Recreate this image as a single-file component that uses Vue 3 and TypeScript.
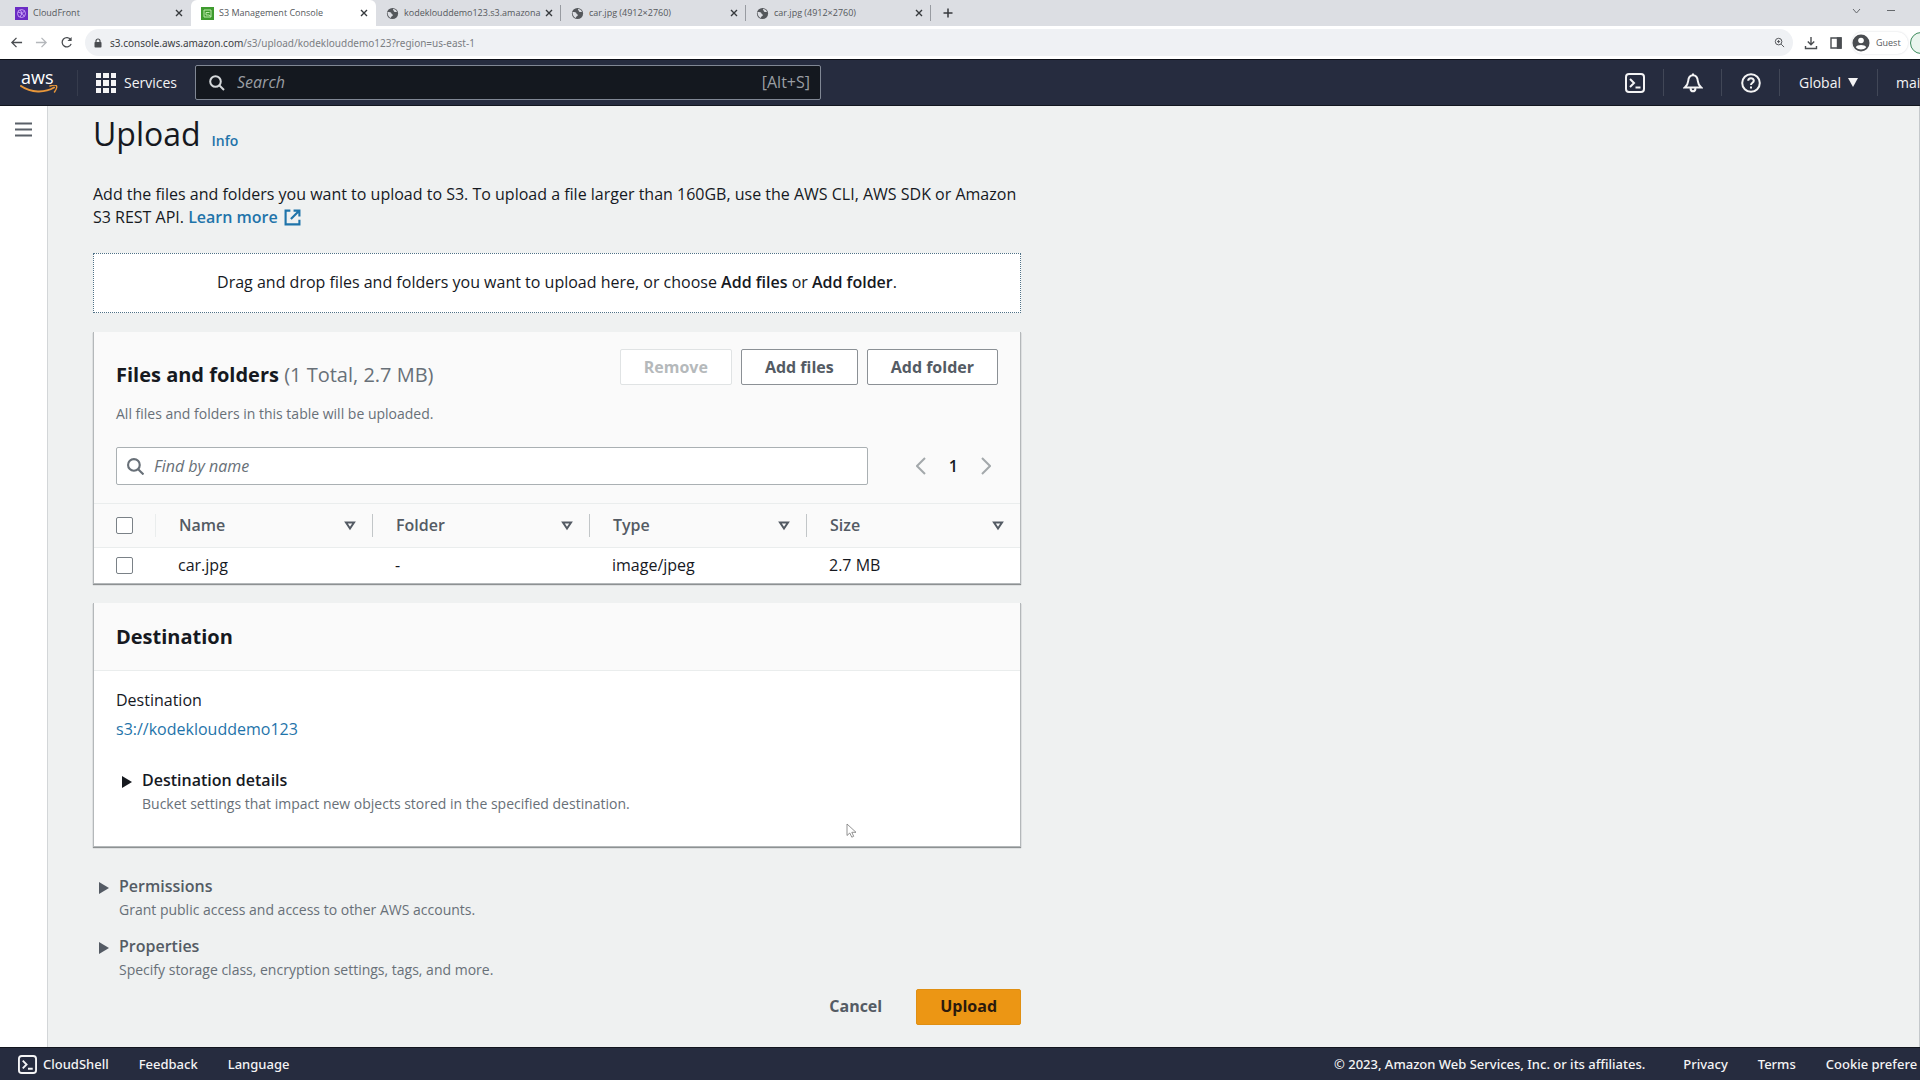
<script setup lang="ts">
interface Tab {
  title: string
  icon: 'cloudfront' | 's3' | 'globe'
  active?: boolean
}

interface UploadFile {
  name: string
  folder: string
  type: string
  size: string
}

const tabs: Tab[] = [
  { title: 'CloudFront', icon: 'cloudfront' },
  { title: 'S3 Management Console', icon: 's3', active: true },
  { title: 'kodeklouddemo123.s3.amazona', icon: 'globe' },
  { title: 'car.jpg (4912×2760)', icon: 'globe' },
  { title: 'car.jpg (4912×2760)', icon: 'globe' },
]

const columns: string[] = ['Name', 'Folder', 'Type', 'Size']

const files: UploadFile[] = [
  { name: 'car.jpg', folder: '-', type: 'image/jpeg', size: '2.7 MB' },
]
</script>

<template>
  <div class="window">
    <div class="tabs">
      <div v-for="(tab, i) in tabs" :key="i" class="tab" :class="{ active: tab.active }">
        <svg v-if="tab.icon === 'cloudfront'" class="favicon" viewBox="0 0 13 13">
          <rect width="13" height="13" fill="#6b2bc4" />
          <g fill="none" stroke="#d9b8ff" stroke-width="0.8">
            <circle cx="6.5" cy="6.5" r="4" />
            <path d="M3 5l4 1.5L9.5 4M5 10l2-3.500L9 9M5.500 3L7 6.500" />
          </g>
        </svg>
        <svg v-else-if="tab.icon === 's3'" class="favicon" viewBox="0 0 13 13">
          <rect width="13" height="13" fill="#3f9b2f" />
          <path d="M3 3h7v7H3zM5 5.500h3.500M5 5.500v2.500h3l2 1.500" fill="none" stroke="#c9f2b8" stroke-width="0.9" />
        </svg>
        <svg v-else class="favicon" viewBox="0 0 13 13">
          <circle cx="6.5" cy="6.5" r="5.600" fill="#54575b" />
          <path d="M1.500 5c2 0 4 .3 4 1.500S7 7 6.800 8.200 5 9 4.800 11C3 10.300 1.500 8.500 1.500 5z" fill="#dcdee3" />
          <path d="M7 2c-.5 1.500 1 1.300 1 2.500 1 .8 2 .3 3 .5C10.500 3.300 9 2 7 2z" fill="#dcdee3" />
        </svg>
        <span class="tab-title">{{ tab.title }}</span>
        <button class="tab-close" type="button" aria-label="Close tab">
          <svg viewBox="0 0 8 8"><path d="M1 1l6 6M7 1L1 7" /></svg>
        </button>
      </div>
      <button class="tab-new" type="button" aria-label="New tab">
        <svg viewBox="0 0 10 10"><path d="M5 0.500v9M0.500 5h9" /></svg>
      </button>
      <div class="window-controls">
        <svg width="9" height="6" viewBox="0 0 9 6"><path d="M1 1l3.500 4L8 1" /></svg>
        <svg width="8" height="6" viewBox="0 0 8 6"><path d="M0 2.500h8" /></svg>
      </div>
    </div>

    <div class="toolbar">
      <button type="button" aria-label="Back">
        <svg viewBox="0 0 14 14"><path d="M13 7H2M7 2L2 7l5 5" /></svg>
      </button>
      <button type="button" aria-label="Forward" class="dim">
        <svg viewBox="0 0 14 14"><path d="M1 7h11M7 2l5 5-5 5" /></svg>
      </button>
      <button type="button" aria-label="Reload">
        <svg viewBox="0 0 14 14"><path d="M11.500 4A5 5 0 1 0 12 8.500" /><path d="M12.500 1v4.500H8z" fill="#4a4d51" stroke="none" /></svg>
      </button>
      <div class="address">
        <svg class="lock" viewBox="0 0 8 10"><rect x="0.500" y="4" width="7" height="5.500" rx="0.800" /><path d="M2 4.500V3a2 2 0 0 1 4 0v1.500" fill="none" stroke="#4a4d51" stroke-width="1.200" /></svg>
        <span class="url"><span class="host">s3.console.aws.amazon.com</span>/s3/upload/kodeklouddemo123?region=us-east-1</span>
        <svg class="zoom" viewBox="0 0 12 12"><circle cx="5" cy="5" r="3.600" /><path d="M7.800 7.800L11 11M5 3.300v3.400M3.300 5h3.400" /></svg>
      </div>
      <div class="tools">
        <svg width="14" height="14" viewBox="0 0 14 14"><path d="M7 1v7.500M3.800 5.500L7 8.700l3.200-3.200M1.500 10v2.500h11V10" /></svg>
        <svg width="12" height="12" viewBox="0 0 12 12"><path d="M1 1h10v10H1z" /><path d="M7.500 1H11v10H7.500z" fill="#4a4d51" /></svg>
        <button class="profile" type="button">
          <svg width="18" height="18" viewBox="0 0 18 18"><circle cx="9" cy="9" r="8.500" fill="#4a4d51" stroke="none" /><circle cx="9" cy="6.500" r="2.800" fill="#fff" stroke="none" /><path d="M3.800 13.200c1-3 9.400-3 10.400 0-2.500 3-7.900 3-10.400 0z" fill="#fff" stroke="none" /></svg>
          <span>Guest</span>
        </button>
        <span class="update"></span>
      </div>
    </div>

    <header class="nav">
      <a class="logo" href="#" aria-label="AWS home">
        <span>aws</span>
        <svg viewBox="0 0 38 9"><path d="M1 1c10 7 24 7 33 1.500" fill="none" stroke="#e8973a" stroke-width="2" stroke-linecap="round" /><path d="M30 1c3-1 6-1 6.500 0s-.5 4-2 6" fill="none" stroke="#e8973a" stroke-width="1.500" stroke-linecap="round" /></svg>
      </a>
      <button class="services" type="button">
        <svg viewBox="0 0 20 20">
          <path d="M0 0h5v5H0zM7 0h6v5H7zM15 0h5v5h-5zM0 7h5v6H0zM7 7h6v6H7zM15 7h5v6h-5zM0 15h5v5H0zM7 15h6v5H7zM15 15h5v5h-5z" />
        </svg>
        <span>Services</span>
      </button>
      <label class="nav-search">
        <svg viewBox="0 0 16 16"><circle cx="6.500" cy="6.500" r="5.300" /><path d="M10.500 10.500L15 15" /></svg>
        <input type="search" placeholder="Search" aria-label="Search" />
        <span>[Alt+S]</span>
      </label>
      <div class="nav-right">
        <button class="cell shell" type="button" aria-label="CloudShell">
          <svg viewBox="0 0 20 20"><rect x="1" y="1" width="18" height="18" rx="3" /><path d="M5 6l4 4-4 4M10.500 14.500h5" /></svg>
        </button>
        <button class="cell bell" type="button" aria-label="Notifications">
          <svg viewBox="0 0 20 20"><path d="M1.800 14.500C4 12.500 5 10.500 5.200 8 5.500 4 7.500 2.200 10 2.200S14.500 4 14.800 8c.2 2.500 1.200 4.500 3.400 6.500zM7.500 15.500c.5 3.800 4.500 3.800 5 0M10 0.500v1.500" /></svg>
        </button>
        <button class="cell help" type="button" aria-label="Help">
          <svg viewBox="0 0 20 20"><circle cx="10" cy="10" r="8.800" /><path d="M7.200 7.800c0-3.500 5.600-3.500 5.600 0 0 2-2.800 2-2.800 4.200M10 13.500v2" /></svg>
        </button>
        <button class="cell region" type="button">
          <span>Global</span>
          <svg viewBox="0 0 10 9"><path d="M0 0h10L5 9z" /></svg>
        </button>
        <button class="cell account" type="button">mai</button>
      </div>
    </header>

    <div class="body">
      <aside class="rail">
        <button type="button" aria-label="Open navigation">
          <svg viewBox="0 0 17 15"><path d="M0 1.500h17M0 7.500h17M0 13.500h17" /></svg>
        </button>
      </aside>
      <main class="content">
        <div class="column">
          <div class="heading">
            <h1>Upload</h1>
            <a href="#">Info</a>
          </div>
          <p class="intro">
            Add the files and folders you want to upload to S3. To upload a file larger than 160GB, use the AWS CLI, AWS SDK or Amazon S3 REST API.
            <a href="#">Learn more<svg viewBox="0 0 16 16"><path d="M6 1.500H1.500v13h13V10M9 1.500h5.500V7M14.500 1.500L6.500 9.500" /></svg></a>
          </p>
          <div class="dropzone">
            <p>Drag and drop files and folders you want to upload here, or choose <b>Add files</b> or <b>Add folder</b>.</p>
          </div>

          <section class="card files">
            <div class="card-top">
              <div>
                <h2>Files and folders <span>(1 Total, 2.7 MB)</span></h2>
                <p class="note">All files and folders in this table will be uploaded.</p>
              </div>
              <div class="actions">
                <button class="btn" type="button" disabled>Remove</button>
                <button class="btn" type="button">Add files</button>
                <button class="btn" type="button">Add folder</button>
              </div>
            </div>
            <div class="filter">
              <label class="find">
                <svg viewBox="0 0 16 16"><circle cx="6.500" cy="6.500" r="5.500" /><path d="M10.500 10.500L15.500 15.500" /></svg>
                <input type="text" placeholder="Find by name" aria-label="Find by name" />
              </label>
              <nav class="pages" aria-label="Pages">
                <button type="button" aria-label="Previous page"><svg viewBox="0 0 10 18"><path d="M9 1L1 9l8 8" /></svg></button>
                <b>1</b>
                <button type="button" aria-label="Next page"><svg viewBox="0 0 10 18"><path d="M1 1l8 8-8 8" /></svg></button>
              </nav>
            </div>
            <table>
              <colgroup>
                <col class="check-col" />
                <col class="data-col" />
                <col class="data-col" />
                <col class="data-col" />
                <col />
              </colgroup>
              <thead>
                <tr>
                  <th><div class="th check faint"><input type="checkbox" aria-label="Select all files" /></div></th>
                  <th v-for="c in columns" :key="c" scope="col">
                    <div class="th">
                      <span>{{ c }}</span>
                      <button type="button" :aria-label="'Sort by ' + c">
                        <svg viewBox="0 0 12 10"><path d="M2 1.500h8L6 7.500z" /></svg>
                      </button>
                    </div>
                  </th>
                </tr>
              </thead>
              <tbody>
                <tr v-for="f in files" :key="f.name">
                  <td class="check"><input type="checkbox" :aria-label="'Select ' + f.name" /></td>
                  <td>{{ f.name }}</td>
                  <td>{{ f.folder }}</td>
                  <td>{{ f.type }}</td>
                  <td>{{ f.size }}</td>
                </tr>
              </tbody>
            </table>
          </section>

          <section class="card destination">
            <div class="card-header"><h2>Destination</h2></div>
            <div class="card-body">
              <p class="label">Destination</p>
              <a class="bucket" href="#">s3://kodeklouddemo123</a>
              <details class="expander dark">
                <summary>
                  <svg viewBox="0 0 10 12"><path d="M0 0l10 6-10 6z" /></svg>
                  <span class="expander-text">
                    <b>Destination details</b>
                    <span class="note">Bucket settings that impact new objects stored in the specified destination.</span>
                  </span>
                </summary>
              </details>
            </div>
            <svg class="pointer" viewBox="0 0 11 15"><path d="M1 1v11.500l2.800-2.500 2 4.200 1.900-.9-1.900-4H10z" fill="#fff" stroke="#777" stroke-width="0.800" /></svg>
          </section>

          <div class="more">
            <details class="expander">
              <summary>
                <svg viewBox="0 0 10 12"><path d="M0 0l10 6-10 6z" /></svg>
                <span class="expander-text">
                  <b>Permissions</b>
                  <span class="note">Grant public access and access to other AWS accounts.</span>
                </span>
              </summary>
            </details>
            <details class="expander">
              <summary>
                <svg viewBox="0 0 10 12"><path d="M0 0l10 6-10 6z" /></svg>
                <span class="expander-text">
                  <b>Properties</b>
                  <span class="note">Specify storage class, encryption settings, tags, and more.</span>
                </span>
              </summary>
            </details>
          </div>
          <div class="submit">
            <button class="btn link" type="button">Cancel</button>
            <button class="btn primary" type="button">Upload</button>
          </div>
        </div>
      </main>
    </div>

    <footer class="footer">
      <div class="foot-left">
        <a class="shell-link" href="#">
          <svg viewBox="0 0 20 20"><rect x="1" y="1" width="18" height="18" rx="3" /><path d="M5 6l4 4-4 4M10.500 14.500h5" /></svg>
          CloudShell
        </a>
        <a href="#">Feedback</a>
        <a href="#">Language</a>
      </div>
      <div class="foot-right">
        <span class="copyright">© 2023, Amazon Web Services, Inc. or its affiliates.</span>
        <a href="#">Privacy</a>
        <a href="#">Terms</a>
        <a href="#">Cookie prefere</a>
      </div>
    </footer>
  </div>
</template>

<style>
body {
  margin: 0;
}
</style>

<style scoped>
.window {
  display: flex;
  flex-direction: column;
  min-height: 100vh;
  overflow: hidden;
  background: #eff1f1;
  color: #16191f;
  font: 16px/23px "Open Sans", "Noto Sans", sans-serif;
}
.window * {
  box-sizing: border-box;
}
h1, h2, p {
  margin: 0;
}
a {
  color: #1f74aa;
  text-decoration: none;
}
button {
  margin: 0;
  padding: 0;
  border: 0;
  background: none;
  color: inherit;
  font: inherit;
}
svg {
  display: block;
  flex: none;
}
input {
  min-width: 0;
  font: inherit;
}
b {
  font-weight: 600;
}

/* Browser chrome */
.tabs {
  display: flex;
  height: 26px;
  background: #dcdee3;
  color: #55585c;
  font-size: 9px;
  line-height: 26px;
}
.tab {
  display: flex;
  align-items: center;
  width: 185px;
  padding: 0 8px 0 10px;
  position: relative;
}
.tab:first-child {
  width: 191px;
  padding-left: 15px;
}
.tab:nth-child(n + 3)::after {
  content: "";
  position: absolute;
  right: 0;
  top: 5px;
  width: 1px;
  height: 16px;
  background: #989ba1;
}
.tab.active {
  background: #fff;
  border-radius: 6px 6px 0 0;
}
.favicon {
  width: 13px;
  height: 13px;
}
.tab-title {
  flex: 1;
  min-width: 0;
  margin-left: 5px;
  white-space: nowrap;
}
.tab-close svg {
  width: 8px;
  height: 8px;
  fill: none;
  stroke: #36393d;
  stroke-width: 1.4;
}
.tab-new {
  margin-left: 12px;
}
.tab-new svg {
  width: 10px;
  height: 10px;
  fill: none;
  stroke: #36393d;
  stroke-width: 1.5;
}
.window-controls {
  display: flex;
  align-items: center;
  gap: 26px;
  margin-left: auto;
  padding-right: 25px;
  height: 22px;
}
.window-controls svg {
  fill: none;
  stroke: #66696d;
}
.toolbar {
  display: flex;
  align-items: center;
  height: 34px;
  padding-left: 10px;
  border-bottom: 1px solid #0d1017;
  background: #fff;
  overflow: hidden;
}
.toolbar > button {
  width: 25px;
}
.toolbar > button svg {
  width: 13px;
  height: 13px;
}
.toolbar svg {
  fill: none;
  stroke: #4a4d51;
  stroke-width: 1.4;
}
.toolbar .dim svg {
  stroke: #b4b7bb;
}
.address {
  display: flex;
  align-items: center;
  flex: 1;
  height: 27px;
  padding: 0 8px 0 9px;
  border-radius: 14px;
  background: #eff1f4;
}
.address .lock {
  width: 8px;
  height: 10px;
  fill: #4a4d51;
  stroke: none;
}
.url {
  flex: 1;
  margin-left: 8px;
  color: #7b7e83;
  font: 10px/20px "Noto Sans", sans-serif;
}
.host {
  color: #3c4043;
}
.address .zoom {
  width: 11px;
  height: 11px;
  stroke-width: 1;
}
.tools {
  display: flex;
  align-items: center;
  flex: 0 0 127px;
  width: 127px;
  min-width: 0;
  gap: 12px;
  padding-left: 11px;
}
.profile {
  display: flex;
  align-items: center;
  flex: none;
  gap: 6px;
  width: 56px;
  height: 22px;
  margin-left: -2px;
  border-radius: 11px;
  box-shadow: 0 0 2px #d0d3d8;
  color: #55585c;
  font-size: 9px;
}
.update {
  flex: none;
  width: 22px;
  height: 22px;
  margin-left: -10px;
  border: 1px solid #3d8b5d;
  border-radius: 50%;
  background: #eaf5ee;
}

/* AWS top navigation */
.nav {
  display: flex;
  align-items: center;
  height: 46px;
  border-bottom: 1px solid #12161f;
  background: #262c3f;
  color: #f4f4f5;
  font-size: 14px;
  font-weight: 500;
}
.logo {
  width: 78px;
  height: 26px;
  padding-left: 20px;
  border-right: 1px solid #363c4d;
  color: #fff;
  font-size: 18px;
  line-height: 15px;
}
.logo span {
  display: block;
  padding-left: 1px;
}
.logo svg {
  width: 38px;
  height: 9px;
}
.services {
  display: flex;
  align-items: center;
  gap: 8px;
  width: 117px;
  padding-left: 18px;
}
.services svg {
  width: 20px;
  height: 20px;
  fill: #f4f4f5;
}
.nav-search {
  display: flex;
  align-items: center;
  width: 626px;
  height: 35px;
  padding: 0 10px 0 13px;
  border: 1px solid #808794;
  border-radius: 2px;
  background: #14181f;
  color: #9a9ea3;
  font-size: 16px;
  font-weight: 400;
}
.nav-search svg {
  width: 16px;
  height: 16px;
  fill: none;
  stroke: #d5d8db;
  stroke-width: 2;
}
.nav-search input {
  flex: 1;
  margin-left: 12px;
  padding: 0;
  border: 0;
  outline: 0;
  background: none;
  color: #fff;
}
.nav-search input::placeholder,
.find input::placeholder {
  color: #9a9ea3;
  font-style: italic;
  opacity: 1;
}
.find input::placeholder {
  color: #687078;
}
.nav-right {
  display: flex;
  flex: 0 0 314px;
  margin-left: auto;
  overflow: hidden;
}
.cell {
  display: flex;
  align-items: center;
  justify-content: center;
  flex: none;
  width: 58px;
  height: 27px;
}
.cell + .cell {
  border-left: 1px solid #414757;
}
.cell svg {
  width: 20px;
  height: 20px;
  fill: none;
  stroke: #f4f4f5;
  stroke-width: 2;
}
.shell {
  width: 57px;
}
.region {
  gap: 7px;
  width: 98px;
}
.region svg {
  width: 10px;
  height: 9px;
  fill: #f4f4f5;
  stroke: none;
}
.account {
  width: auto;
  padding-left: 18px;
}

/* Page */
.body {
  display: flex;
  flex: 1;
}
.rail {
  flex: 0 0 48px;
  padding: 16px 0 0 15px;
  border-right: 1px solid #d3d6d8;
  background: #fff;
}
.rail button {
  display: block;
}
.rail svg {
  width: 17px;
  height: 15px;
  stroke: #5a6068;
  stroke-width: 2;
}
.content {
  flex: 1;
  padding: 8px 45px 22px;
  border-right: 1px solid #c5c9cc;
}
.column {
  max-width: 928px;
}
.heading {
  display: flex;
  align-items: baseline;
  gap: 11px;
}
h1 {
  font-size: 32px;
  font-weight: 400;
  line-height: 40px;
}
.heading a {
  font-size: 14px;
  font-weight: 600;
}
.intro {
  margin-top: 29px;
}
.intro a {
  font-weight: 600;
}
.intro svg {
  display: inline-block;
  width: 17px;
  height: 17px;
  margin-left: 6px;
  vertical-align: -3px;
  fill: none;
  stroke: #1f74aa;
  stroke-width: 2;
}
.dropzone {
  margin-top: 24px;
  padding: 17px 0 18px;
  border: 1px dotted #4f7186;
  background: #fff;
  text-align: center;
}
.card {
  position: relative;
  margin-top: 19px;
  border: solid #b4b8ba;
  border-width: 0 1px 1px;
  background: #fff;
  box-shadow: 0 1px 1px #8d9192;
}
h2 {
  font-size: 20px;
  font-weight: 700;
  line-height: 28px;
}
h2 span {
  color: #687078;
  font-weight: 400;
}
.note {
  color: #687078;
  font-size: 14px;
}
.card-top {
  display: flex;
  justify-content: space-between;
  padding: 17px 22px 0;
  background: #fafafa;
}
.card-top h2 {
  margin-top: 12px;
}
.card-top .note {
  margin-top: 13px;
}
.actions {
  display: flex;
  align-items: flex-start;
  gap: 9px;
}
.btn {
  height: 36px;
  padding: 0 23px;
  border: 1px solid #8b9095;
  border-radius: 2px;
  background: #fff;
  color: #545b64;
  font-weight: 700;
}
.btn:disabled {
  border-color: #e0e3e4;
  color: #b5b9bb;
}
.filter {
  display: flex;
  align-items: center;
  justify-content: space-between;
  padding: 22px 29px 18px 22px;
  background: #fafafa;
}
.find {
  display: flex;
  align-items: center;
  flex: 0 0 752px;
  height: 38px;
  padding: 0 10px;
  border: 1px solid #aab0b3;
  border-radius: 2px;
  background: #fff;
}
.find svg {
  width: 17px;
  height: 17px;
  fill: none;
  stroke: #687078;
  stroke-width: 2;
}
.find input {
  flex: 1;
  margin-left: 10px;
  padding: 0;
  border: 0;
  outline: 0;
  background: none;
}
.pages {
  display: flex;
  align-items: center;
  gap: 23px;
}
.pages svg {
  width: 10px;
  height: 18px;
  fill: none;
  stroke: #a3a8ab;
  stroke-width: 2;
}
table {
  width: 100%;
  border-collapse: collapse;
  table-layout: fixed;
}
.check-col {
  width: 62px;
}
.data-col {
  width: 217px;
}
thead tr {
  height: 44px;
  border: solid #eaeded;
  border-width: 1px 0;
  background: #fafafa;
}
th, td {
  padding: 0;
  text-align: left;
}
.th {
  display: flex;
  align-items: center;
  justify-content: space-between;
  height: 23px;
  padding: 0 16px 0 23px;
  border-right: 1px solid #c2c6c8;
  color: #545b64;
  font-weight: 600;
}
th:last-child .th {
  border: 0;
}
.th.check {
  padding-left: 22px;
}
.th.faint {
  border-color: #eaeded;
}
.th svg {
  width: 12px;
  height: 10px;
  fill: none;
  stroke: #545b64;
  stroke-width: 2;
}
td {
  height: 35px;
  padding-left: 22px;
}
input[type="checkbox"] {
  display: block;
  appearance: none;
  width: 17px;
  height: 17px;
  margin: 0;
  border: 1px solid #7a8187;
  border-radius: 2px;
  background: #fff;
}
.card-header {
  padding: 20px 22px 19px;
  border-bottom: 1px solid #eaeded;
  background: #fafafa;
}
.card-body {
  padding: 18px 22px 31px;
}
.bucket {
  display: block;
  width: fit-content;
  margin-top: 6px;
}
.expander summary {
  display: flex;
  gap: 10px;
  list-style: none;
  color: #545b64;
}
.expander summary > svg {
  width: 10px;
  height: 12px;
  margin-top: 7px;
  fill: currentColor;
}
.expander-text {
  display: flex;
  flex-direction: column;
}
.expander.dark {
  margin: 28px 0 0 6px;
}
.expander.dark summary {
  color: #16191f;
}
.pointer {
  position: absolute;
  left: 752px;
  top: 220px;
  width: 11px;
  height: 15px;
}
.more {
  display: flex;
  flex-direction: column;
  gap: 14px;
  margin-top: 28px;
  padding-left: 6px;
}
.submit {
  display: flex;
  justify-content: flex-end;
  gap: 10px;
  margin-top: 8px;
}
.link {
  border-color: transparent;
  background: none;
}
.primary {
  border-color: #e08f12;
  background: #ec9614;
  color: #2b1a0d;
}

/* Footer */
.footer {
  display: flex;
  align-items: center;
  justify-content: space-between;
  height: 33px;
  border-top: 1px solid #12161f;
  background: #262c3f;
  font-family: "Noto Sans", sans-serif;
  font-size: 13px;
  font-weight: 500;
  white-space: nowrap;
}
.footer,
.footer a {
  color: #f4f4f5;
}
.foot-left,
.foot-right {
  display: flex;
  gap: 30px;
}
.foot-left {
  padding-left: 18px;
}
.foot-right {
  flex: 0 0 586px;
}
.copyright {
  margin-right: 8px;
}
.shell-link {
  display: flex;
  align-items: center;
  gap: 6px;
}
.footer svg {
  width: 19px;
  height: 19px;
  fill: none;
  stroke: #f4f4f5;
  stroke-width: 2;
}
</style>
